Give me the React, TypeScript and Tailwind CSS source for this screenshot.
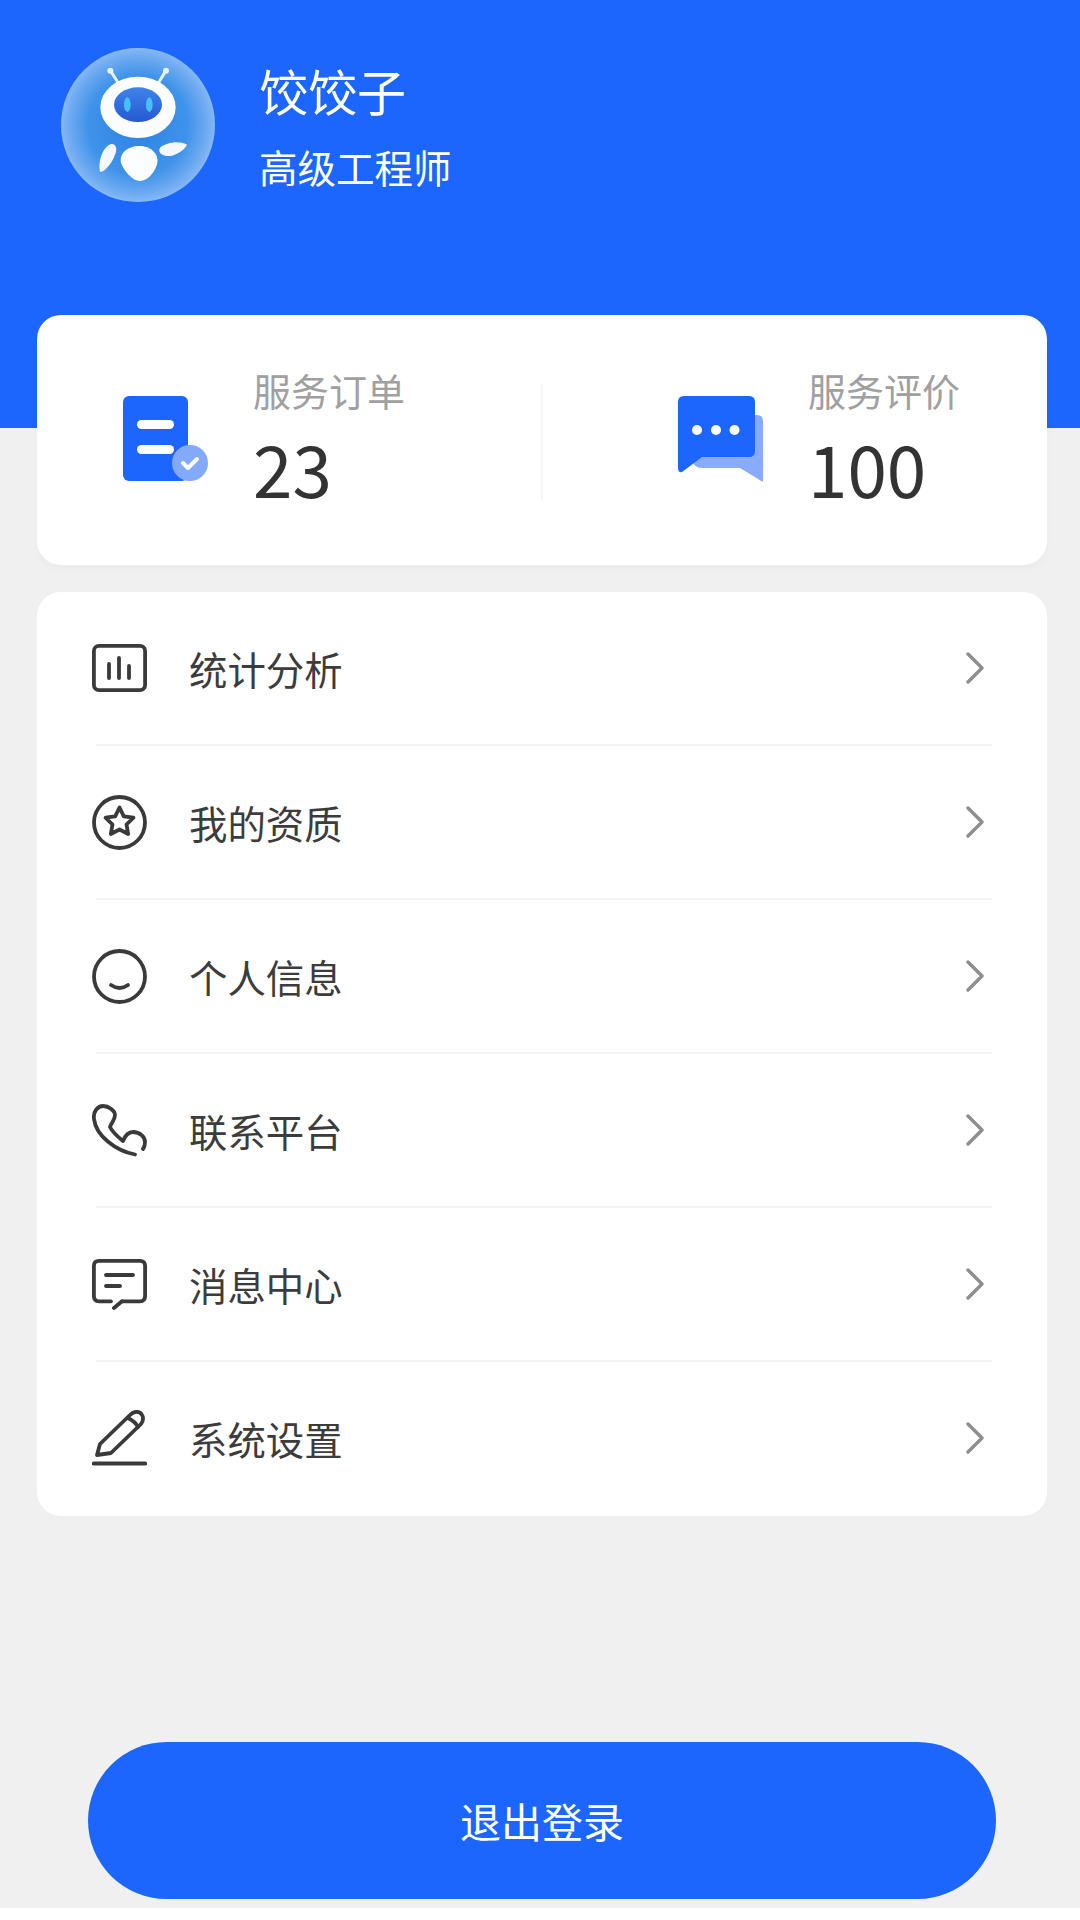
import React from 'react';

const FONT = "font-['Noto_Sans_CJK_SC','Noto_Sans',sans-serif]";

const Avatar = () => (
  <svg viewBox="0 0 462 462" className="h-[154px] w-[154px] shrink-0">
    <defs>
      <radialGradient id="ball" cx="50%" cy="50%" r="50%">
        <stop offset="0%" stopColor="#2c82e4" />
        <stop offset="65%" stopColor="#3f93ea" />
        <stop offset="90%" stopColor="#70abf1" />
        <stop offset="100%" stopColor="#86b8f5" />
      </radialGradient>
      <linearGradient id="visor" x1="0" y1="0" x2="0" y2="1">
        <stop offset="0%" stopColor="#3f83ea" />
        <stop offset="100%" stopColor="#2558d2" />
      </linearGradient>
    </defs>
    <circle cx="231" cy="231" r="231" fill="url(#ball)" />
    <path d="M148 68 L174 108 M315 68 L290 108" stroke="#e6f1fe" strokeWidth="9" strokeLinecap="round" />
    <circle cx="148" cy="68" r="9" fill="#e6f1fe" />
    <circle cx="315" cy="68" r="9" fill="#e6f1fe" />
    <ellipse cx="231" cy="178" rx="113" ry="92" fill="#fbfdff" />
    <ellipse cx="231" cy="170" rx="72" ry="52" fill="url(#visor)" />
    <ellipse cx="199" cy="170" rx="10" ry="22" fill="#45c0f8" />
    <ellipse cx="265" cy="170" rx="10" ry="22" fill="#45c0f8" />
    <path d="M236 294 C274 294 294 322 289 346 C282 376 254 402 236 399 C216 398 190 372 180 344 C174 318 198 294 236 294 Z" fill="#fbfdff" />
    <path d="M150 288 C164 286 170 300 163 318 C154 344 132 372 118 372 C110 348 122 298 150 288 Z" fill="#f4f9ff" />
    <path d="M298 298 C316 284 352 276 378 290 C370 308 340 326 316 324 C298 322 290 310 298 298 Z" fill="#f4f9ff" />
  </svg>
);

const DocIcon = () => (
  <svg viewBox="0 0 85 85" className="h-[85px] w-[85px] shrink-0">
    <rect x="0" y="0" width="65" height="85" rx="6" fill="#1c66fe" />
    <rect x="14" y="24" width="37" height="9" rx="4.500" fill="#fff" />
    <rect x="14" y="49" width="37" height="9" rx="4.500" fill="#fff" />
    <circle cx="67" cy="67" r="18" fill="#83a9fb" />
    <path d="M60 67 L65 72 L74 63" fill="none" stroke="#fff" strokeWidth="4" strokeLinecap="round" strokeLinejoin="round" />
  </svg>
);

const ChatIcon = () => (
  <svg viewBox="0 0 85 86" className="h-[86px] w-[85px] shrink-0">
    <path d="M20 19 H79 Q85 19 85 25 V86 L62 72 H24 Q16 72 14 64 Z" fill="#89abfb" />
    <path d="M6 0 H71 Q77 0 77 6 V55 Q77 61 71 61 H24 L4 76 Q0 77 0 72 V6 Q0 0 6 0 Z" fill="#1c66fe" />
    <circle cx="19" cy="34" r="5" fill="#fff" />
    <circle cx="38" cy="34" r="5" fill="#fff" />
    <circle cx="56.500" cy="34" r="5" fill="#fff" />
  </svg>
);

const BarsIcon = () => (
  <svg viewBox="0 0 55 48" className="h-[48px] w-[55px]" fill="none" stroke="#3a3a3a" strokeWidth="3.800" strokeLinecap="round">
    <rect x="1.900" y="1.900" width="51.200" height="44.200" rx="5" />
    <path d="M17 20 V34 M27 14 V34 M37 22 V34" />
  </svg>
);

const StarIcon = () => (
  <svg viewBox="0 0 55 55" className="h-[55px] w-[55px]" fill="none" stroke="#3a3a3a" strokeWidth="3.800" strokeLinejoin="round">
    <circle cx="27.500" cy="27.500" r="25.500" />
    <path d="M27.500 12.500 L31.800 21.300 L41.500 22.700 L34.500 29.500 L36.200 39 L27.500 34.500 L18.800 39 L20.500 29.500 L13.500 22.700 L23.200 21.300 Z" />
  </svg>
);

const SmileIcon = () => (
  <svg viewBox="0 0 55 55" className="h-[55px] w-[55px]" fill="none" stroke="#3a3a3a" strokeWidth="3.800" strokeLinecap="round">
    <circle cx="27.500" cy="27.500" r="25.500" />
    <path d="M19 36 Q27.500 42 36 36" />
  </svg>
);

const PhoneIcon = () => (
  <svg viewBox="0 0 55 53" className="h-[53px] w-[55px]" fill="none" stroke="#3a3a3a" strokeWidth="3.800" strokeLinecap="round" strokeLinejoin="round">
    <path d="M43 50.500 C24 47 4 32 2 15 C1 7 6 2 11 2 C17 2 23 7 23 11 C23 16 19 19 18 23 C21 29 26 33 31 37 C33 32 36 28 41 28 C48 28 53 33 53 38 C53 41 52.500 43 51 45" />
  </svg>
);

const MsgIcon = () => (
  <svg viewBox="0 0 55 51" className="h-[51px] w-[55px]" fill="none" stroke="#3a3a3a" strokeWidth="3.800" strokeLinecap="round" strokeLinejoin="round">
    <path d="M30 42.300 H48 Q53.100 42.300 53.100 37 V7 Q53.100 1.900 48 1.900 H7 Q1.900 1.900 1.900 7 V37 Q1.900 42.300 7 42.300 H19" />
    <path d="M30 42.300 L22 49" />
    <path d="M14 16 H41 M14 27 H28" />
  </svg>
);

const PenIcon = () => (
  <svg viewBox="0 0 55 56" className="h-[56px] w-[55px]" fill="none" stroke="#3a3a3a" strokeWidth="3.800" strokeLinecap="round" strokeLinejoin="round">
    <path d="M5 45 L8 34 L38 5 C42 0.500 48 1 50 5 C52 8 51 11 49 14 L19 43 Z" />
    <path d="M36 8 C40 10 44 13 46 17" />
    <path d="M2 53.500 H53" strokeWidth="4.200" />
  </svg>
);

const Chevron = () => (
  <svg viewBox="0 0 18 32" className="h-[32px] w-[18px] shrink-0" fill="none" stroke="#8e8e8e" strokeWidth="3.400" strokeLinecap="round" strokeLinejoin="round">
    <path d="M2 2 L16 16 L2 30" />
  </svg>
);

const menu = [
  { label: '统计分析', icon: <BarsIcon /> },
  { label: '我的资质', icon: <StarIcon /> },
  { label: '个人信息', icon: <SmileIcon /> },
  { label: '联系平台', icon: <PhoneIcon /> },
  { label: '消息中心', icon: <MsgIcon /> },
  { label: '系统设置', icon: <PenIcon /> },
];

export default function App() {
  return (
    <div className={`flex h-[1920px] w-[1080px] flex-col overflow-hidden bg-[#f0f0f1] ${FONT}`}>
      {/* Header */}
      <div className="flex h-[428px] shrink-0 items-start bg-[#1c66fe] pl-[61px] pt-[48px]">
        <Avatar />
        <div className="ml-[44px] flex flex-col text-white">
          <span className="mt-[7px] text-[49px] leading-[70px]">饺饺子</span>
          <span className="mt-[13px] text-[38.500px] leading-[56px]">高级工程师</span>
        </div>
      </div>

      {/* Stats */}
      <div className="ml-[37px] mr-[33px] -mt-[113px] flex h-[250px] shrink-0 rounded-[24px] bg-white shadow-[0_6px_6px_rgba(0,0,0,0.02)]">
        <div className="flex w-[504px] shrink-0 items-start pl-[86px] pt-[81px]">
          <DocIcon />
          <div className="ml-[45px] -mt-[34px] flex flex-col">
            <span className="text-[38px] leading-[56px] text-[#a0a0a0]">服务订单</span>
            <span className="mt-[7px] text-[71px] leading-[84px] text-[#333333]">23</span>
          </div>
        </div>
        <div className="mt-[68px] h-[118px] w-[2px] bg-[#f7f7f7]" />
        <div className="flex w-[504px] shrink-0 items-start pl-[135px] pt-[81px]">
          <ChatIcon />
          <div className="ml-[45px] -mt-[34px] flex flex-col">
            <span className="text-[38px] leading-[56px] text-[#a0a0a0]">服务评价</span>
            <span className="mt-[7px] text-[71px] leading-[84px] text-[#333333]">100</span>
          </div>
        </div>
      </div>

      {/* Menu */}
      <div className="ml-[37px] mr-[33px] mt-[27px] flex shrink-0 flex-col rounded-[24px] bg-white pb-[2px] shadow-[0_2px_4px_rgba(0,0,0,0.01)]">
        {menu.map((item, i) => (
          <div key={item.label}>
            <div className="flex h-[152px] items-center pl-[55px] pr-[63px]">
              <div className="flex w-[55px] shrink-0 justify-center">{item.icon}</div>
              <span className="ml-[42px] flex-1 text-[38.400px] leading-[56px] text-[#3c3c3c]">{item.label}</span>
              <Chevron />
            </div>
            {i < menu.length - 1 && <div className="ml-[59px] mr-[55px] h-[2px] bg-[#f2f2f3]" />}
          </div>
        ))}
      </div>

      {/* Logout */}
      <div className="flex flex-1 flex-col justify-end">
        <button className="mb-[9px] ml-[88px] flex h-[157px] w-[908px] items-center justify-center rounded-full bg-[#1c66fe] text-[41px] text-white">
          退出登录
        </button>
        <div className="h-[12px] bg-white" />
      </div>
    </div>
  );
}
